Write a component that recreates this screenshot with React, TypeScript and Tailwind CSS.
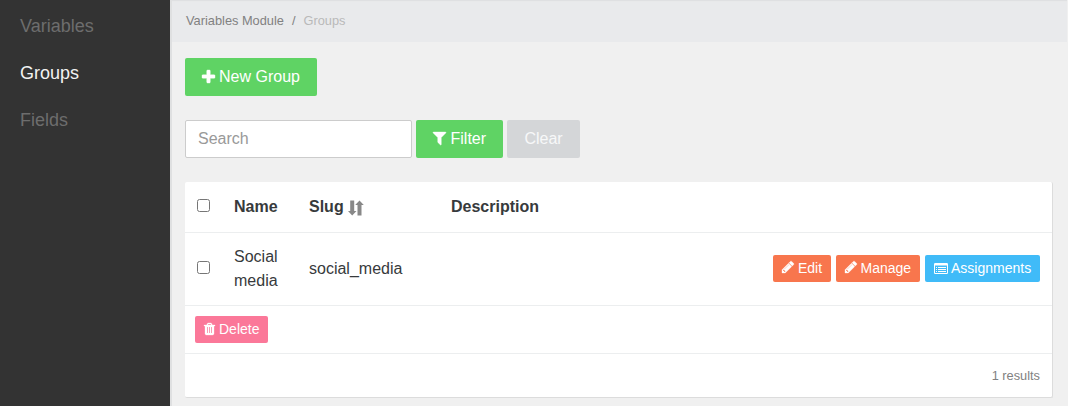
import type { ReactNode } from 'react';

const PLUS =
  'M1600 736v192q0 40-28 68t-68 28h-416v416q0 40-28 68t-68 28h-192q-40 0-68-28t-28-68v-416h-416q-40 0-68-28t-28-68v-192q0-40 28-68t68-28h416v-416q0-40 28-68t68-28h192q40 0 68 28t28 68v416h416q40 0 68 28t28 68z';
const FILTER =
  'M1595 295q17 41-14 70l-493 493v742q0 42-39 59-13 5-25 5-27 0-45-19l-256-256q-19-19-19-45v-486l-493-493q-31-29-14-70 17-39 59-39h1280q42 0 59 39z';
const PENCIL =
  'M491 1536l91-91-235-235-91 91v107h128v128h107zm523-928q0-22-22-22-10 0-17 7l-542 542q-7 7-7 17 0 22 22 22 10 0 17-7l542-542q7-7 7-17zm-54-192l416 416-832 832h-416v-416zm683 96q0 53-37 90l-166 166-416-416 166-165q36-38 90-38 53 0 91 38l235 234q37 39 37 91z';
const TRASH =
  'M704 1376v-704q0-14-9-23t-23-9h-64q-14 0-23 9t-9 23v704q0 14 9 23t23 9h64q14 0 23-9t9-23zm256 0v-704q0-14-9-23t-23-9h-64q-14 0-23 9t-9 23v704q0 14 9 23t23 9h64q14 0 23-9t9-23zm256 0v-704q0-14-9-23t-23-9h-64q-14 0-23 9t-9 23v704q0 14 9 23t23 9h64q14 0 23-9t9-23zm-544-992h448l-48-117q-7-9-17-11h-317q-10 2-17 11zm928 32v64q0 14-9 23t-23 9h-96v948q0 83-47 143.500t-113 60.500h-832q-66 0-113-58.500t-47-141.500v-952h-96q-14 0-23-9t-9-23v-64q0-14 9-23t23-9h309l70-167q15-37 54-63t79-26h320q40 0 79 26t54 63l70 167h309q14 0 23 9t9 23z';

function Glyph({ d, box, className }: { d: string; box: string; className: string }) {
  return (
    <svg viewBox={box} className={`shrink-0 overflow-visible fill-current stroke-current ${className}`} strokeWidth="40" aria-hidden="true">
      <path d={d} />
    </svg>
  );
}

function ListIcon() {
  return (
    <svg viewBox="0 0 14 12" className="mr-[3px] h-3 w-3.5 shrink-0 fill-current" aria-hidden="true">
      <path
        fillRule="evenodd"
        d="M1.200 0h11.600A1.200 1.200 0 0 1 14 1.200v8.600a1.200 1.200 0 0 1-1.200 1.200H1.200A1.200 1.200 0 0 1 0 9.800V1.200A1.200 1.200 0 0 1 1.200 0zM1 2.500v7.200a.3.3 0 0 0 .3.3h11.400a.3.3 0 0 0 .3-.3V2.500z"
      />
      <path d="M2 4h1v1H2zM4 4h8v1H4zM2 6h1v1H2zM4 6h8v1H4zM2 8h1v1H2zM4 8h8v1H4z" />
    </svg>
  );
}

function SortIcon() {
  return (
    <svg viewBox="0 0 16 16" className="mt-[3px] ml-1 size-4 shrink-0 fill-[#888]" aria-hidden="true">
      <path d="M2.200.5h4v10.500h2.300L4.200 15.500 0 11h2.200zM9.500 15.500V5H7.200L11.500.5l4.300 4.500h-2.300v10.500z" />
    </svg>
  );
}

function SmallButton({ color, children }: { color: string; children: ReactNode }) {
  return (
    <button className={`flex h-[27px] items-center rounded-[2px] pl-[9px] text-sm leading-[21px] whitespace-nowrap text-white ${color}`}>
      {children}
    </button>
  );
}

function Check() {
  return <input type="checkbox" className="m-0 block size-[13px]" />;
}

export default function App() {
  return (
    <div className="flex h-[406px] w-[1068px] overflow-hidden bg-[#f0f0f0] font-['Liberation_Sans',sans-serif] text-base text-[#373a3c]">
      <nav className="flex w-[170px] shrink-0 flex-col gap-5 bg-[#333] pt-[12.500px] pl-5 text-lg leading-[27px] text-[#6d6d6d]">
        <a>Variables</a>
        <a className="text-[#f2f2f2]">Groups</a>
        <a>Fields</a>
      </nav>
      <main className="min-w-0 flex-1 border-l-2 border-[#dfe0e1]">
        <header className="mr-px flex h-[42px] items-center bg-[#e9eaec] pl-3.5 text-[12.800px] text-[#818181] shadow-[inset_0_2px_1px_-1px_#dedfe1]">
          <span>Variables Module</span>
          <span className="mx-2">/</span>
          <span className="text-[#b9b9b9]">Groups</span>
        </header>
        <div className="pt-4 pr-[15px] pl-[13px]">
          <button className="flex h-[38px] w-[132px] items-center rounded-[2px] bg-[#5fd364] pl-[17px] text-white">
            <Glyph d={PLUS} box="192 128 1408 1408" className="mr-1 mb-[2px] size-[13px]" />
            New Group
          </button>
          <form className="mt-6 flex gap-1">
            <input
              placeholder="Search"
              className="h-[38px] w-[227px] rounded-[2px] border border-[#ccc] bg-white px-3 placeholder:text-[#999]"
            />
            <button type="button" className="flex h-[38px] w-[87px] items-center rounded-[2px] bg-[#5fd364] pl-[17px] text-white">
              <Glyph d={FILTER} box="192 256 1408 1408" className="mr-[4.500px] mb-px size-[13px]" />
              Filter
            </button>
            <button type="button" className="h-[38px] w-[73px] rounded-[2px] bg-[#d4d6d8] text-[#f7f8f8]">
              Clear
            </button>
          </form>
          <section className="mt-6 rounded-[2px] border-r border-b border-[#dcdcdc] bg-white">
            <div className="grid h-[51px] grid-cols-[37px_75px_142px_1fr] items-center border-b border-[#eceeef] pl-3 pb-px font-bold">
              <div className="pb-0.5"><Check /></div>
              <span>Name</span>
              <span className="flex items-center">Slug<SortIcon /></span>
              <span>Description</span>
            </div>
            <div className="grid h-[73px] grid-cols-[37px_75px_142px_1fr] items-center border-b border-[#eceeef] pl-3">
              <div className="pb-[3px]"><Check /></div>
              <span className="w-12 leading-6">Social media</span>
              <span>social_media</span>
              <div className="flex justify-end gap-[5px] pr-3 pb-px">
                <div className="grid w-[58px]">
                  <SmallButton color="bg-[#f8764d]">
                    <Glyph d={PENCIL} box="128 256 1536 1536" className="mr-1 mb-px size-3" />
                    Edit
                  </SmallButton>
                </div>
                <div className="grid w-[84px]">
                  <SmallButton color="bg-[#f8764d]">
                    <Glyph d={PENCIL} box="128 256 1536 1536" className="mr-[3.500px] mb-px size-3" />
                    Manage
                  </SmallButton>
                </div>
                <div className="grid w-[115px]">
                  <SmallButton color="bg-[#40bbf8]">
                    <ListIcon />
                    Assignments
                  </SmallButton>
                </div>
              </div>
            </div>
            <div className="flex h-12 items-center border-b border-[#eceeef] pl-2.5">
              <div className="grid w-[73px]">
                <SmallButton color="bg-[#fb7899]">
                  <Glyph d={TRASH} box="192 128 1408 1536" className="mr-1 mb-px h-3 w-[11px]" />
                  Delete
                </SmallButton>
              </div>
            </div>
            <div className="flex h-[43px] items-center justify-end pt-px pr-3 text-[12.800px] text-[#818181]">1 results</div>
          </section>
        </div>
      </main>
    </div>
  );
}
